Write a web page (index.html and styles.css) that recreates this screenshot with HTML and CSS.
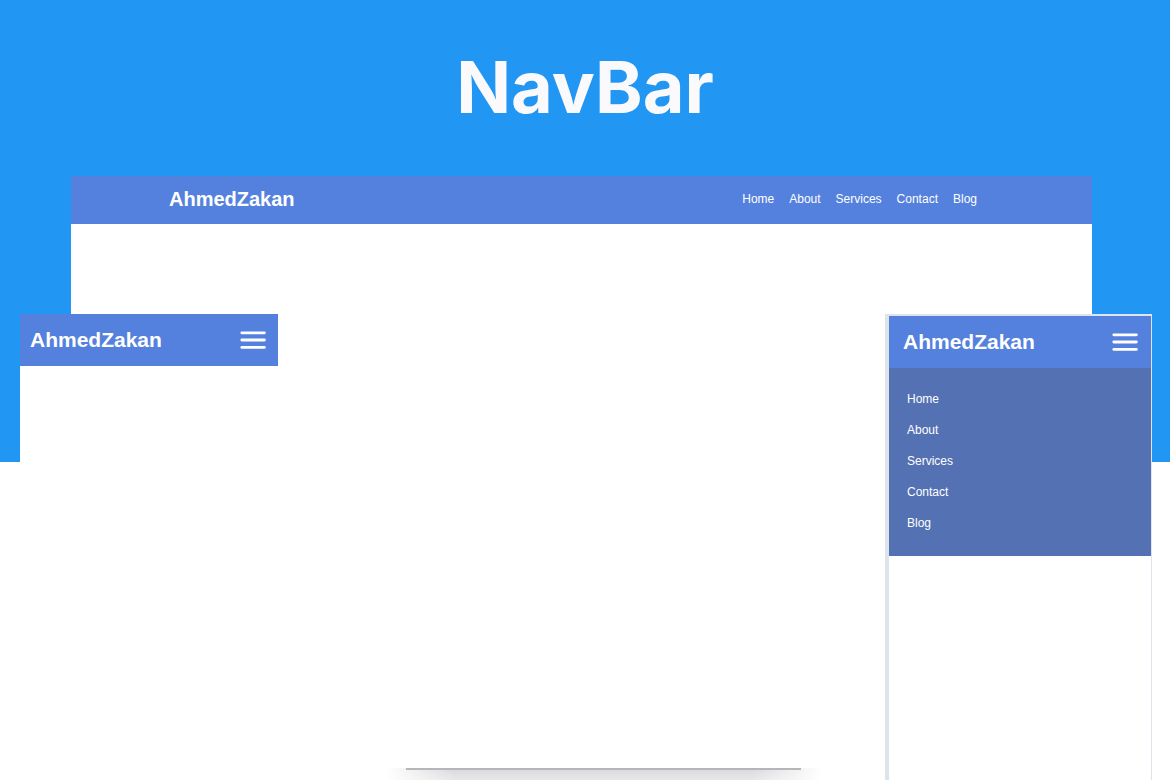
FILE: index.html
```html
<!DOCTYPE html>
<html lang="en">
<head>
<meta charset="utf-8">
<meta name="viewport" content="width=device-width, initial-scale=1">
<title>NavBar</title>
<link rel="stylesheet" href="styles.css">
</head>
<body>
<main class="page">
  <h1 class="title">NavBar</h1>
  <div class="stage">
    <section class="desktop">
      <header class="bar bar-desktop">
        <a class="logo" href="#">AhmedZakan</a>
        <nav class="links" aria-label="Main">
          <a href="#">Home</a>
          <a href="#">About</a>
          <a href="#">Services</a>
          <a href="#">Contact</a>
          <a href="#">Blog</a>
        </nav>
      </header>
    </section>
    <div class="devices">
      <section class="phone">
        <header class="bar bar-phone">
          <a class="logo" href="#">AhmedZakan</a>
          <button class="toggle" type="button" aria-label="Open menu">
            <svg width="26" height="18" viewBox="0 0 26 18" aria-hidden="true"><path d="M1.8 1.8h22.6M1.8 9h22.6M1.8 16.4h22.6"/></svg>
          </button>
        </header>
      </section>
      <div class="stand"></div>
      <section class="phone phone-open">
        <header class="bar bar-phone">
          <a class="logo" href="#">AhmedZakan</a>
          <button class="toggle" type="button" aria-label="Close menu" aria-expanded="true">
            <svg width="26" height="18" viewBox="0 0 26 18" aria-hidden="true"><path d="M1.8 1.8h22.6M1.8 9h22.6M1.8 16.4h22.6"/></svg>
          </button>
        </header>
        <nav class="menu" aria-label="Mobile">
          <a href="#">Home</a>
          <a href="#">About</a>
          <a href="#">Services</a>
          <a href="#">Contact</a>
          <a href="#">Blog</a>
        </nav>
      </section>
    </div>
  </div>
</main>
</body>
</html>
```
FILE: styles.css
```css
* {
  box-sizing: border-box;
}

body {
  margin: 0;
  font-family: "Liberation Sans", Arial, sans-serif;
  font-size: 12px;
  line-height: 16px;
  color: #fff;
}

a {
  color: inherit;
  text-decoration: none;
}

.page {
  display: flex;
  flex-direction: column;
  min-height: 100vh;
  background: linear-gradient(#2196f3, #2196f3) top / 100% 462px no-repeat #fff;
}

.title {
  margin: 0;
  padding: 43px 0 45px;
  font-family: Inter, "Noto Sans", sans-serif;
  font-size: 72px;
  line-height: 88px;
  font-weight: 700;
  text-align: center;
  color: #fafafc;
}

.stage {
  flex: 1;
  display: grid;
}

.desktop,
.devices {
  grid-area: 1 / 1;
}

.desktop {
  margin: 0 78px 0 71px;
  background: #fff;
}

.bar {
  display: flex;
  align-items: center;
  justify-content: space-between;
  background: #5581de;
}

.bar-desktop {
  height: 48px;
  padding: 0 115px 2px 98px;
}

.logo {
  font-size: 20px;
  line-height: 24px;
  font-weight: 700;
}

.links {
  display: flex;
  gap: 15px;
}

.devices {
  display: grid;
  grid-template-columns: 258px 1fr 267px;
  margin-top: 138px;
  padding: 0 18px 0 20px;
}

.phone {
  background: #fff;
}

.phone-open {
  border: solid #dfe3ec;
  border-width: 2px 1px 0 4px;
}

.bar-phone {
  height: 52px;
  padding: 0 12px 0 10px;
}

.bar-phone .logo {
  font-size: 21px;
}

.phone-open .bar-phone {
  padding: 0 13px 0 14px;
}

.toggle {
  display: flex;
  padding: 0;
  border: 0;
  background: none;
  color: inherit;
  cursor: pointer;
}

.toggle path {
  fill: none;
  stroke: currentColor;
  stroke-width: 2.8;
  stroke-linecap: round;
}

.menu {
  display: flex;
  flex-direction: column;
  gap: 15px;
  padding: 23px 18px 25px;
  background: #5371b3;
}

.stand {
  align-self: end;
  justify-self: end;
  width: 435px;
  height: 12px;
  margin-right: 64px;
  background:
    linear-gradient(#b4b6ba, #b4b6ba) top / 395px 2px no-repeat,
    linear-gradient(90deg, #fff, transparent 16%, transparent 84%, #fff),
    linear-gradient(#d8d8db, #e8e8ea);
}
```
